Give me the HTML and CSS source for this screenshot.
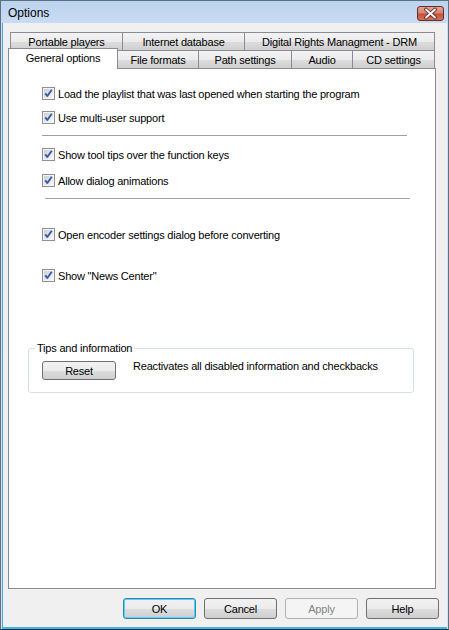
FILE: index.html
```html
<!DOCTYPE html>
<html>
<head>
<meta charset="utf-8">
<link rel="stylesheet" href="styles.css">
</head>
<body>
<svg class="defs" width="0" height="0">
  <defs>
    <linearGradient id="cbg" x1="0" y1="0" x2="1" y2="1">
      <stop offset="0" stop-color="#cbcfd5"/>
      <stop offset="1" stop-color="#f7f8f9"/>
    </linearGradient>
    <symbol id="check" viewBox="0 0 13 13">
      <rect x="0.5" y="0.5" width="12" height="12" fill="#f4f4f4" stroke="#8f8f8f"/>
      <rect x="2" y="2" width="9" height="9" fill="url(#cbg)"/>
      <path d="M3.2 6.3 L5.3 9 L9.8 2.8" stroke="#3b57a8" stroke-width="1.9" fill="none" stroke-linejoin="round"/>
    </symbol>
  </defs>
</svg>
<div class="window">
  <div class="titlebar">
    <span class="title">Options</span>
    <span class="close">
      <svg width="27" height="15" viewBox="0 0 27 15">
        <path d="M9 3.5 L18 11.5 M18 3.5 L9 11.5" stroke="#4a1c16" stroke-width="3.6" stroke-linecap="round"/>
        <path d="M9 3.5 L18 11.5 M18 3.5 L9 11.5" stroke="#ffffff" stroke-width="2" stroke-linecap="round"/>
      </svg>
    </span>
  </div>
  <div class="client">
    <div class="tabs">
      <div class="tabrow back">
        <div class="tab t-portable">Portable players</div>
        <div class="tab t-internet">Internet database</div>
        <div class="tab t-drm">Digital Rights Managment - DRM</div>
      </div>
      <div class="tabrow front">
        <div class="tab selected t-general">General options</div>
        <div class="tab t-formats">File formats</div>
        <div class="tab t-path">Path settings</div>
        <div class="tab t-audio">Audio</div>
        <div class="tab t-cd">CD settings</div>
      </div>
    </div>
    <div class="panel">
      <div class="option r1"><svg class="cb"><use href="#check"/></svg><span>Load the playlist that was last opened when starting the program</span></div>
      <div class="option r2"><svg class="cb"><use href="#check"/></svg><span>Use multi-user support</span></div>
      <div class="sep s1"></div>
      <div class="option r3"><svg class="cb"><use href="#check"/></svg><span>Show tool tips over the function keys</span></div>
      <div class="option r4"><svg class="cb"><use href="#check"/></svg><span>Allow dialog animations</span></div>
      <div class="sep s2"></div>
      <div class="option r5"><svg class="cb"><use href="#check"/></svg><span>Open encoder settings dialog before converting</span></div>
      <div class="option r6"><svg class="cb"><use href="#check"/></svg><span>Show "News Center"</span></div>
      <fieldset class="group">
        <legend>Tips and information</legend>
        <div class="group-body">
          <button class="btn reset">Reset</button>
          <span class="hint">Reactivates all disabled information and checkbacks</span>
        </div>
      </fieldset>
    </div>
    <div class="buttons">
      <button class="btn default">OK</button>
      <button class="btn">Cancel</button>
      <button class="btn disabled">Apply</button>
      <button class="btn">Help</button>
    </div>
  </div>
</div>
</body>
</html>
```

FILE: styles.css
```css
html, body {
  margin: 0;
  padding: 0;
  background: #ffffff;
}
.defs {
  position: absolute;
  width: 0;
  height: 0;
}
body {
  font-family: "Liberation Sans", Arial, sans-serif;
  font-size: 11px;
  letter-spacing: -0.2px;
  color: #000;
}
.window {
  width: 449px;
  height: 630px;
  box-sizing: border-box;
  border: 1px solid #5f6f82;
  border-bottom-color: #1a2a3a;
  background: linear-gradient(to bottom, #bcd3ee 0px, #d2e2f4 40px, #d6e5f5 100%);
  display: flex;
  flex-direction: column;
}
.titlebar {
  height: 22px;
  display: flex;
  align-items: center;
  padding: 0 2px 0 7px;
}
.title {
  font-family: "Liberation Sans", sans-serif;
  font-size: 12px;
  letter-spacing: 0;
  color: #000;
  margin-top: 2px;
}
.close {
  margin-left: auto;
  margin-right: 2px;
  margin-top: 2px;
  width: 27px;
  height: 15px;
  box-sizing: border-box;
  border: 1px solid #6b2b22;
  border-radius: 3px;
  background: linear-gradient(to bottom, #e3a596 0%, #d58474 45%, #c4503c 55%, #d2735f 100%);
  display: flex;
  overflow: hidden;
}
.close svg {
  display: block;
  margin: -1px;
}
.client {
  flex: 1;
  margin: 0 1px 0 1px;
  background: #f0f0f0;
  border-left: 1px solid #4aa7e0;
  border-bottom: 2px solid #3fb6e8;
  display: flex;
  flex-direction: column;
  padding: 9px 0 0 0;
}
.tabs {
  display: flex;
  flex-direction: column;
}
.tabrow {
  display: flex;
  height: 18px;
}
.tabrow.back {
  margin-left: 7px;
}
.tabrow.front {
  margin-left: 5px;
  align-items: flex-end;
}
.tab {
  box-sizing: border-box;
  height: 18px;
  border: 1px solid #898c95;
  border-bottom: none;
  background: linear-gradient(to bottom, #f3f3f3 0%, #ebebeb 50%, #dddddd 51%, #cfcfcf 100%);
  display: flex;
  align-items: center;
  justify-content: center;
  white-space: nowrap;
  margin-left: -1px;
  padding-top: 1px;
}
.tabrow .tab:first-child {
  margin-left: 0;
}
.tab.selected {
  background: #ffffff;
  height: 21px;
  margin-top: -2px;
  margin-bottom: -1px;
  position: relative;
  z-index: 1;
  align-items: flex-start;
  padding-top: 3px;
}
.t-portable { width: 113px; }
.t-internet { width: 123px; }
.t-drm { width: 191px; }
.t-general { width: 110px; }
.t-formats { width: 82px; }
.t-path { width: 94px; }
.t-audio { width: 62px; }
.t-cd { width: 83px; }
.panel {
  margin-left: 5px;
  width: 428px;
  height: 521px;
  box-sizing: border-box;
  border: 1px solid #898c95;
  background: #ffffff;
  padding: 18px 0 0 33px;
  display: flex;
  flex-direction: column;
  align-items: flex-start;
}
.option {
  display: flex;
  align-items: center;
  height: 13px;
  gap: 3px;
  white-space: nowrap;
}
.cb {
  width: 13px;
  height: 13px;
  flex: none;
}
.r2 { margin-top: 11px; }
.r3 { margin-top: 12px; }
.r4 { margin-top: 13px; }
.r5 { margin-top: 29px; }
.r6 { margin-top: 28px; }
.sep {
  height: 1px;
  background: #a0a0a0;
  width: 365px;
}
.s1 { margin-top: 11px; }
.s2 { margin-top: 11px; margin-left: 3px; }
.group {
  margin: 60px 0 0 -14px;
  width: 386px;
  box-sizing: border-box;
  border: 1px solid #d5dfe5;
  border-radius: 3px;
  padding: 0 0 12px 0;
  min-width: 0;
}
.group legend {
  margin-left: 6px;
  padding: 0 2px;
  line-height: 13px;
  font-size: 11px;
}
.group-body {
  display: flex;
  align-items: flex-start;
  padding: 6px 0 0 13px;
}
.hint {
  margin-left: 17px;
  margin-top: -1px;
  white-space: nowrap;
}
.btn {
  font-family: inherit;
  font-size: 11px;
  letter-spacing: -0.2px;
  color: #000;
  box-sizing: border-box;
  border: 1px solid #707070;
  border-radius: 3px;
  background: linear-gradient(to bottom, #f2f2f2 0%, #ebebeb 50%, #dddddd 51%, #cfcfcf 100%);
  padding: 0;
  margin: 0;
}
.reset {
  width: 74px;
  height: 19px;
}
.buttons {
  display: flex;
  justify-content: flex-end;
  gap: 8px;
  margin-top: 9px;
  padding-right: 8px;
}
.buttons .btn {
  width: 73px;
  height: 21px;
}
.btn.default {
  border-color: #3c7fb1;
  box-shadow: inset 0 0 0 1px #48d6fb;
}
.btn.disabled {
  border-color: #adb2b5;
  background: #f4f4f4;
  color: #838383;
}
```
